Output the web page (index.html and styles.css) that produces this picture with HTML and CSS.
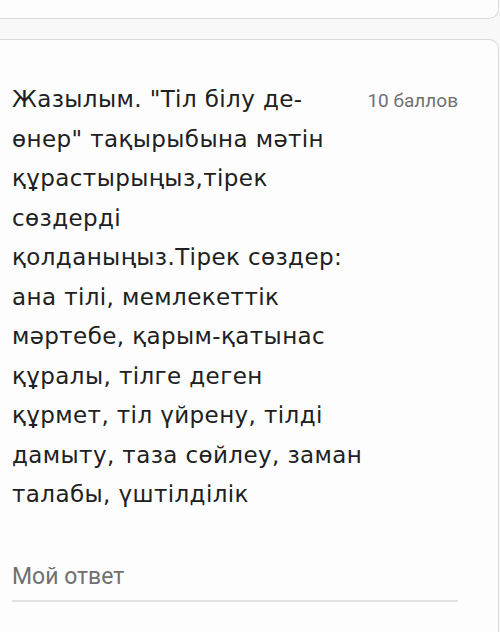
FILE: index.html
```html
<!DOCTYPE html>
<html lang="kk">
<head>
<meta charset="utf-8">
<title>Вопрос</title>
<link rel="stylesheet" href="styles.css">
</head>
<body>
<div class="page">
  <div class="card card-prev"></div>
  <div class="card card-question">
    <div class="question-head">
      <div class="question-title">Жазылым. "Тіл білу де-<br>өнер" тақырыбына мәтін<br>құрастырыңыз,тірек<br>сөздерді<br>қолданыңыз.Тірек сөздер:<br>ана тілі, мемлекеттік<br>мәртебе, қарым-қатынас<br>құралы, тілге деген<br>құрмет, тіл үйрену, тілді<br>дамыту, таза сөйлеу, заман<br>талабы, үштілділік</div>
      <div class="question-points">10 баллов</div>
    </div>
    <div class="answer">Мой ответ</div>
  </div>
</div>
</body>
</html>
```
FILE: styles.css
```css
html, body {
  margin: 0;
  padding: 0;
  background: #f8f8f8;
}
.page {
  width: 499px;
  height: 632px;
  overflow: hidden;
}
.card {
  background: #fdfdfd;
  border: 1px solid #dadada;
  border-left: none;
}
.card-prev {
  height: 18px;
  border-top: none;
  border-radius: 0 0 10px 0;
}
.card-question {
  margin-top: 20px;
  border-bottom: none;
  border-radius: 0 10px 0 0;
  height: 620px;
  padding: 40px 40px 0 12px;
}
.question-head {
  display: flex;
  justify-content: space-between;
  align-items: baseline;
}
.question-title {
  font-family: "DejaVu Sans", sans-serif;
  font-size: 23px;
  letter-spacing: 0.4px;
  line-height: 39.5px;
  color: #202020;
}
.question-points {
  font-family: Roboto, "Liberation Sans", sans-serif;
  font-size: 19px;
  color: #707070;
}
.answer {
  margin-top: 48px;
  font-family: Roboto, "Liberation Sans", sans-serif;
  font-size: 23px;
  color: #707070;
  padding-bottom: 10px;
  border-bottom: 2px solid #e2e2e2;
}
```
